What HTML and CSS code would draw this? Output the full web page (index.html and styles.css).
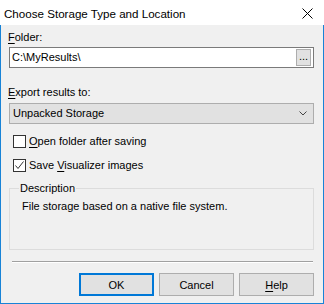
FILE: index.html
```html
<!DOCTYPE html>
<html lang="en">
<head>
    <meta charset="UTF-8">
    <title>Choose Storage Type and Location</title>
    <link rel="stylesheet" href="styles.css">
</head>
<body>
    <div class="window">
        <div class="titlebar">
            <span class="title">Choose Storage Type and Location</span>
            <svg class="close" width="11" height="11" viewBox="0 0 11 11">
                <path d="M0.5 0.5 L10.5 10.5 M10.5 0.5 L0.5 10.5" stroke="#000" stroke-width="1" fill="none"/>
            </svg>
        </div>

        <div class="content">
            <div class="label"><u>F</u>older:</div>
            <div class="textbox">
                <span class="textbox-value">C:\MyResults\</span>
                <button class="browse-button">...</button>
            </div>

            <div class="label export-label"><u>E</u>xport results to:</div>
            <div class="combo">
                <span>Unpacked Storage</span>
                <svg class="chevron" width="8" height="5" viewBox="0 0 8 5">
                    <path d="M0.5 0.5 L4 4 L7.5 0.5" stroke="#444" stroke-width="1" fill="none"/>
                </svg>
            </div>

            <div class="checks">
                <div class="check-row">
                    <span class="checkbox"></span>
                    <span><u>O</u>pen folder after saving</span>
                </div>
                <div class="check-row">
                    <span class="checkbox">
                        <svg width="11" height="11" viewBox="0 0 11 11">
                            <path d="M1.5 5.5 L4 8.5 L9.5 1.5" stroke="#333" stroke-width="1" fill="none"/>
                        </svg>
                    </span>
                    <span>Save <u>V</u>isualizer images</span>
                </div>
            </div>

            <fieldset class="group">
                <legend>Description</legend>
                <p class="description">File storage based on a native file system.</p>
            </fieldset>

            <div class="separator"></div>

            <div class="button-row">
                <button class="dialog-button default-button">OK</button>
                <button class="dialog-button">Cancel</button>
                <button class="dialog-button"><u>H</u>elp</button>
            </div>
        </div>
    </div>
</body>
</html>
```

FILE: styles.css
```css
body {
    margin: 0;
    font-family: 'Liberation Sans', Arial, sans-serif;
    font-size: 11px;
    line-height: 15px;
    color: #000;
}
.window {
    width: 324px;
    height: 304px;
    box-sizing: border-box;
    border: 1px solid #1883d7;
    border-top: none;
    background-color: #f0f0f0;
}
.titlebar {
    height: 25px;
    background-color: white;
    display: flex;
    align-items: center;
    justify-content: space-between;
    padding: 0 11px 0 4px;
    margin: 0 -1px;
}
.title {
    font-size: 11.6px;
    padding-top: 1px;
}
.close {
    display: block;
    margin-top: 1px;
}
.content {
    padding: 5px 9px 0 8px;
}
.label {
    margin-left: -1px;
}
u {
    text-decoration-thickness: 1px;
    text-underline-offset: 2px;
}
.textbox {
    margin-top: 2px;
    height: 21px;
    box-sizing: border-box;
    border: 1px solid #7a7a7a;
    background-color: white;
    display: flex;
    align-items: center;
    justify-content: space-between;
    padding: 0 2px 0 2px;
}
.browse-button {
    width: 15px;
    height: 17px;
    box-sizing: border-box;
    padding: 0 0 3px;
    border: 1px solid #adadad;
    background-color: #e1e1e1;
    font-family: inherit;
    font-size: 11px;
    line-height: 11px;
    color: #000;
}
.export-label {
    margin-top: 17px;
}
.combo {
    margin-top: 3px;
    height: 21px;
    box-sizing: border-box;
    border: 1px solid #adadad;
    background-color: #e1e1e1;
    display: flex;
    align-items: center;
    justify-content: space-between;
    padding: 0 6px 0 3px;
}
.chevron {
    display: block;
}
.checks {
    margin-top: 7px;
    display: flex;
    flex-direction: column;
    gap: 4px;
}
.check-row {
    height: 20px;
    display: flex;
    align-items: center;
    padding-left: 4px;
}
.checkbox {
    width: 13px;
    height: 13px;
    box-sizing: border-box;
    border: 1px solid #333;
    background-color: white;
    margin-right: 3px;
    display: flex;
    align-items: center;
    justify-content: center;
}
.checkbox svg {
    display: block;
}
.group {
    margin: 6px 0 0 0;
    height: 69px;
    box-sizing: border-box;
    border: 1px solid #dcdcdc;
    padding: 0 8px;
}
.group legend {
    padding: 0 1px;
    margin-left: 1px;
}
.description {
    margin: 3px 0 0 4px;
}
.separator {
    margin: 11px 1px 0 3px;
    height: 1px;
    background-color: #a0a0a0;
    border-bottom: 1px solid white;
}
.button-row {
    margin-top: 10px;
    display: flex;
    justify-content: flex-end;
    gap: 5px;
}
.dialog-button {
    width: 75px;
    height: 23px;
    box-sizing: border-box;
    border: 1px solid #adadad;
    background-color: #e1e1e1;
    font-family: inherit;
    font-size: 11px;
    color: #000;
    padding: 0;
}
.default-button {
    border: 2px solid #0078d7;
}
```
